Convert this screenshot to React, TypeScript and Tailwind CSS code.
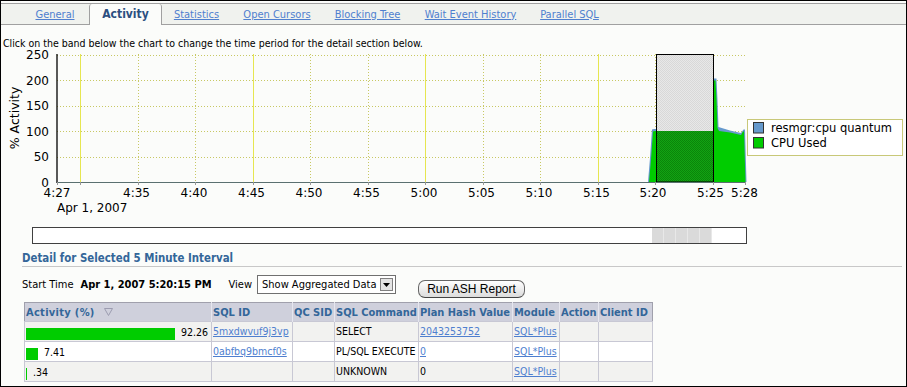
import React from "react";

const tabs = [
  { label: "General", w: "w-[68px]" },
  { label: "Activity", w: "w-[73px]", active: true },
  { label: "Statistics", w: "w-[69px]" },
  { label: "Open Cursors", w: "w-[92px]" },
  { label: "Blocking Tree", w: "w-[89px]" },
  { label: "Wait Event History", w: "w-[117px]" },
  { label: "Parallel SQL", w: "w-[81px]" },
];

const yTicks = [250, 200, 150, 100, 50, 0];
const yOf = (v: number) => 182 - v * 0.5084;
const gridX = Array.from({ length: 12 }, (_, k) => 80 + 57.5 * k);
const xLabels: [string, number][] = [
  ["4:27", 57], ["4:35", 136.5], ["4:40", 194], ["4:45", 251.5], ["4:50", 309],
  ["4:55", 366.5], ["5:00", 424], ["5:05", 481.5], ["5:10", 539], ["5:15", 596.5],
  ["5:20", 653], ["5:25", 710.5], ["5:28", 744.5],
];

const greenPts =
  "649,182 651,160 653,131.5 655,131 713,131 714,80.5 715.5,80.5 716.5,100 717.5,128 719,131 730,132.5 741,135 743,131.5 744,131.5 745.5,182";
const bluePts =
  "648,182 650,158 652,129.5 654,129 713,129 713.5,78.5 716.5,78.5 717.5,100 718.5,127 730,130.5 741,133 743.5,129.5 745,129.5 746.5,182";

function ActivityChart() {
  return (
    <svg width="905" height="170" className="block overflow-visible [font-stretch:normal]">
      <defs>
        <pattern id="selGray" width="2" height="2" patternUnits="userSpaceOnUse">
          <rect width="2" height="2" fill="#e8e8e8" />
          <rect width="1" height="1" fill="#d8d8d8" />
          <rect x="1" y="1" width="1" height="1" fill="#d8d8d8" />
        </pattern>
        <pattern id="selGreen" width="2" height="2" patternUnits="userSpaceOnUse">
          <rect width="2" height="2" fill="#13a313" />
          <rect width="1" height="1" fill="#0a850a" />
          <rect x="1" y="1" width="1" height="1" fill="#0a850a" />
        </pattern>
        <clipPath id="selClip">
          <rect x="656" y="54.5" width="57.5" height="128" />
        </clipPath>
      </defs>
      <g transform="translate(-1,-51)" fontFamily="'DejaVu Sans', sans-serif" fontSize="12">
        {/* grid */}
        {yTicks.slice(0, 5).map((v) => (
          <line key={v} x1="57" x2="746" y1={Math.round(yOf(v)) + 0.5} y2={Math.round(yOf(v)) + 0.5}
            stroke="#c8c864" strokeDasharray="1 2" />
        ))}
        {gridX.map((x, k) => (
          <line key={x} x1={Math.round(x) + 0.5} x2={Math.round(x) + 0.5} y1="54" y2="182"
            stroke={k % 3 === 0 ? "#e6e650" : "#c8c864"} strokeDasharray={k % 3 === 0 ? undefined : "1 2"} />
        ))}

        {/* series */}
        <polygon points={bluePts} fill="#6699cc" />
        <polygon points={greenPts} fill="#00cc00" />

        {/* selected interval */}
        <rect x="656" y="54.5" width="57.5" height="128" fill="url(#selGray)" />
        <polygon points={greenPts} fill="url(#selGreen)" clipPath="url(#selClip)" />
        <rect x="656.5" y="54.5" width="57" height="127.5" fill="none" stroke="#000" />

        {/* axes */}
        <line x1="57" x2="57" y1="54" y2="183" stroke="#000" strokeWidth="1.3" />
        <line x1="57" x2="746" y1="182.5" y2="182.5" stroke="#5a7070" />
        {[57, ...gridX, 745].map((x) => (
          <line key={"t" + x} x1={Math.round(x) + 0.5} x2={Math.round(x) + 0.5} y1="182" y2="185" stroke="#999" />
        ))}

        {yTicks.map((v) => (
          <text key={"y" + v} x="49" y={yOf(v) + 4.5} textAnchor="end">{v}</text>
        ))}
        <text x="19" y="118" textAnchor="middle" fontSize="12.5" transform="rotate(-90 19 118)">% Activity</text>

        {xLabels.map(([l, x]) => (
          <text key={l} x={x} y="197" textAnchor="middle">{l}</text>
        ))}
        <text x="57" y="212">Apr 1, 2007</text>

        {/* legend */}
        <rect x="747.5" y="119.5" width="155" height="36" fill="#fff" stroke="#c8c878" />
        <rect x="753.5" y="122.5" width="10" height="10.5" fill="#6699cc" stroke="#333" />
        <rect x="753.5" y="137.5" width="10" height="10.5" fill="#00cc00" stroke="#333" />
        <text x="771" y="132" fontSize="11.5">resmgr:cpu quantum</text>
        <text x="771" y="147" fontSize="11.5">CPU Used</text>
      </g>
    </svg>
  );
}

const rows = [
  { pct: "92.26", bar: 149, sql: "5mxdwvuf9j3vp", cmd: "SELECT", plan: "2043253752", planLink: true, bg: "bg-[#f2f2f0]" },
  { pct: "7.41", bar: 12, sql: "0abfbq9bmcf0s", cmd: "PL/SQL EXECUTE", plan: "0", planLink: true, bg: "bg-white" },
  { pct: ".34", bar: 1, sql: "", cmd: "UNKNOWN", plan: "0", planLink: false, bg: "bg-[#f2f2f0]" },
];

const link = "text-[#4f7fcf] underline";

export default function App() {
  return (
    <div className="w-[907px] h-[387px] overflow-hidden border border-black bg-[#fbfcfa] text-[11px] leading-[13px] text-black font-['DejaVu_Sans_Condensed','DejaVu_Sans',sans-serif] [font-stretch:condensed]">
      {/* tabs */}
      <div className="mt-[2px] h-[22px] flex items-stretch border-t border-b border-[#a0a0a0] bg-[#f0f2ee] pl-[20px]">
        {tabs.map((t) =>
          t.active ? (
            <div key={t.label}
              className={`${t.w} -mb-px flex items-center justify-center rounded-t-[3px] border-l border-r border-[#a0a0a0] bg-[#fbfcfa] text-[12px] font-bold text-[#2b4f80]`}>
              {t.label}
            </div>
          ) : (
            <div key={t.label} className={`${t.w} flex items-center justify-center`}>
              <span className={link}>{t.label}</span>
            </div>
          )
        )}
      </div>

      <div className="pt-[12px] pl-[2px] h-[26px] text-[10.5px]">
        Click on the band below the chart to change the time period for the detail section below.
      </div>

      <ActivityChart />

      {/* time band */}
      <div className="mt-[6px] ml-[31px] w-[715px] h-[17px] border border-[#404040] bg-white flex items-stretch">
        <div className="ml-[619px] flex">
          {[0, 1, 2, 3, 4].map((i) => (
            <div key={i} className="w-[12px] bg-[#dadada] border-r border-[#e8e8e8]" />
          ))}
        </div>
      </div>

      {/* detail header */}
      <div className="mt-[8px] ml-[21px] mr-[4px] pb-[1px] border-b border-[#c8c8c8] text-[11.4px] font-bold text-[#336699]">
        Detail for Selected 5 Minute Interval
      </div>

      <div className="mt-[8px] ml-[21px] flex items-start">
        <div className="h-[19px] flex items-center">
          <span>Start Time</span>
          <span className="ml-[7px] font-bold">Apr 1, 2007 5:20:15 PM</span>
          <span className="ml-[17px]">View</span>
        </div>
        <div className="ml-[5px] w-[139px] h-[19px] border border-[#707070] bg-white flex items-center justify-between pl-[4px] pr-[2px]">
          <span>Show Aggregated Data</span>
          <span className="w-[13px] h-[13px] border border-[#808080] bg-[#e4e4e4] flex items-center justify-center">
            <svg width="7" height="4"><polygon points="0,0 7,0 3.5,4" fill="#000" /></svg>
          </span>
        </div>
        <button className="ml-[22px] mt-[5px] w-[107px] h-[18px] rounded-[7px] border border-[#666] border-b-[#444] bg-gradient-to-b from-white to-[#dcdcdc] text-[12px] leading-[14px] font-['Liberation_Sans',sans-serif] [font-stretch:normal]">
          Run ASH Report
        </button>
      </div>

      {/* table */}
      <table className="mt-[4px] ml-[23px] table-fixed border-collapse w-[628px] border border-[#a0a0ac]">
        <colgroup>
          <col className="w-[187px]" />
          <col className="w-[81px]" />
          <col className="w-[42px]" />
          <col className="w-[84px]" />
          <col className="w-[94px]" />
          <col className="w-[47px]" />
          <col className="w-[39px]" />
          <col className="w-[54px]" />
        </colgroup>
        <thead>
          <tr className="h-[19px] bg-[#cfd0dc] text-[#336699] font-bold text-left">
            <th className="px-[1px] border-r border-[#e6e6ee] whitespace-nowrap">
              <span className="inline-flex items-center">
                <span className="tracking-[0.3px]">Activity (%)</span>
                <svg width="9" height="8" className="ml-[9px]"><polygon points="0.5,0.5 8.5,0.5 4.5,7.5" fill="none" stroke="#9c9cb0" /></svg>
              </span>
            </th>
            <th className="px-[1px] border-r border-[#e6e6ee]">SQL ID</th>
            <th className="px-[1px] border-r border-[#e6e6ee] whitespace-nowrap">QC SID</th>
            <th className="px-[1px] border-r border-[#e6e6ee] whitespace-nowrap">SQL Command</th>
            <th className="px-[1px] border-r border-[#e6e6ee] whitespace-nowrap">Plan Hash Value</th>
            <th className="px-[1px] border-r border-[#e6e6ee]">Module</th>
            <th className="px-[1px] border-r border-[#e6e6ee]">Action</th>
            <th className="px-[1px] whitespace-nowrap">Client ID</th>
          </tr>
        </thead>
        <tbody className="text-[10.5px]">
          {rows.map((r) => (
            <tr key={r.cmd} className={`h-[20px] ${r.bg}`}>
              <td className="px-[1px] border border-[#c8c8d4]">
                <div className="flex items-end h-[14px] mt-[3px]">
                  <div className="h-[12px] bg-[#00cc00]" style={{ width: r.bar }} />
                  <span className="ml-[6px] self-start leading-[12px]">{r.pct}</span>
                </div>
              </td>
              <td className="px-[1px] border border-[#c8c8d4]"><span className={link}>{r.sql}</span></td>
              <td className="border border-[#c8c8d4]" />
              <td className="px-[1px] border border-[#c8c8d4] whitespace-nowrap">{r.cmd}</td>
              <td className="px-[1px] border border-[#c8c8d4]">
                {r.planLink ? <span className={link}>{r.plan}</span> : r.plan}
              </td>
              <td className="px-[1px] border border-[#c8c8d4]"><span className={link}>SQL*Plus</span></td>
              <td className="border border-[#c8c8d4]" />
              <td className="border border-[#c8c8d4]" />
            </tr>
          ))}
        </tbody>
      </table>
    </div>
  );
}
